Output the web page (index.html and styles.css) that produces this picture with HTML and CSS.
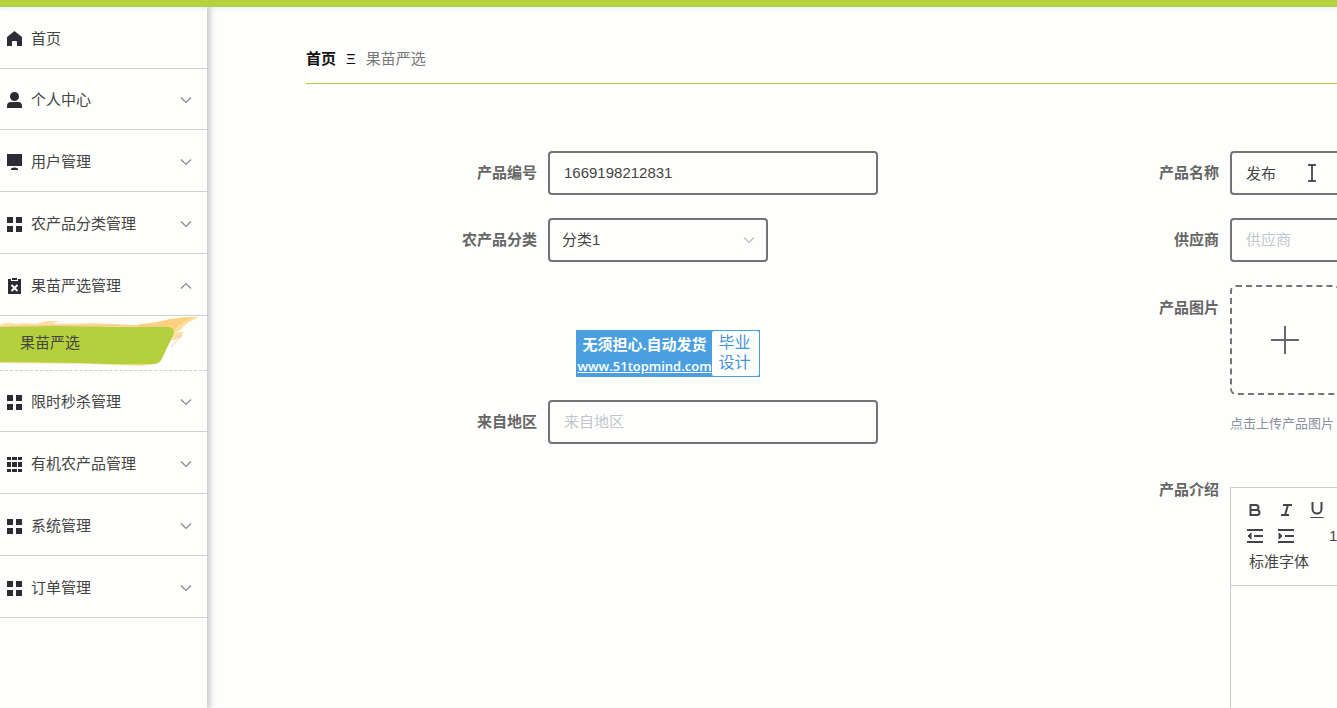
FILE: index.html
```html
<!DOCTYPE html>
<html lang="zh-CN">
<head>
<meta charset="utf-8">
<title>果苗严选</title>
<link rel="stylesheet" href="styles.css">
</head>
<body>
<svg class="sprite" width="0" height="0" aria-hidden="true">
  <symbol id="chevron" viewBox="0 0 12 12"><path d="M1 3.500l5 5 5-5" fill="none" stroke="currentColor" stroke-width="1.200"/></symbol>
  <symbol id="grid4" viewBox="0 0 16 16"><path d="M0 1h6v6H0zM9 1h6v6H9zM0 10h6v6H0zM9 10h6v6H9z"/></symbol>
</svg>
<header class="topbar"></header>
<div class="layout">
  <nav class="sidebar">
    <ul class="menu">
      <li><a class="menu-item" href="#"><svg class="icon" viewBox="0 0 16 16"><path d="M7.500 0L0 6v9h5v-4q0-1 1-1h3q1 0 1 1v4h5V6z"/></svg>首页</a></li>
      <li><a class="menu-item" href="#"><svg class="icon" viewBox="0 0 16 16"><circle cx="7.500" cy="4.500" r="4.500"/><path d="M0 16v-2q0-4 4-4h7q4 0 4 4v2z"/></svg>个人中心<svg class="chevron"><use href="#chevron"/></svg></a></li>
      <li><a class="menu-item" href="#"><svg class="icon" viewBox="0 0 16 16"><path d="M0 0h15v12H0zM4 14.500l3-1h1l3 1V16H4z"/></svg>用户管理<svg class="chevron"><use href="#chevron"/></svg></a></li>
      <li><a class="menu-item" href="#"><svg class="icon"><use href="#grid4"/></svg>农产品分类管理<svg class="chevron"><use href="#chevron"/></svg></a></li>
      <li>
        <a class="menu-item" href="#"><svg class="icon" viewBox="0 0 16 16"><path d="M1 1h3v2h7V1h3v15H1zM5 0h5v2H5z"/><path d="M4.500 7l6 6M10.500 7l-6 6" stroke="#fff" stroke-width="2"/></svg>果苗严选管理<svg class="chevron open"><use href="#chevron"/></svg></a>
        <a class="submenu-item" href="#">
          <svg class="brush" viewBox="0 0 208 54" preserveAspectRatio="none">
            <path d="M0 9q8-4 16-1l9-1 10 1 12-3 12 0-6 3 42-1 40 2q16-1 27-4 13-2 22-4l16 0-10 5q-6 4-8 8l-5 2q4 0 8 0l-6 6-7 2q-4 8-10 14l-6 10-14 2-50-2L0 47z" fill="#fce0a3"/>
            <path d="M140 8q20-1 30-5l26-2q-14 5-20 12l-5 5-6-7-25 0z" fill="#fbd07e"/>
            <path d="M0 11q60-3 140-1l24 1M174 24l9-5-11 12" fill="none" stroke="#f8c795"/>
            <path d="M0 11l55-1 70 1h45q7 2 4 8l-12 25q-2 4-8 4-33 1-73-1L0 46z" fill="#b5d03d"/>
          </svg>
          <span>果苗严选</span>
        </a>
      </li>
      <li><a class="menu-item" href="#"><svg class="icon"><use href="#grid4"/></svg>限时秒杀管理<svg class="chevron"><use href="#chevron"/></svg></a></li>
      <li><a class="menu-item" href="#"><svg class="icon" viewBox="0 0 16 16"><path d="M0 1h4v3H0zM5 1h5v3H5zM11 1h4v3h-4zM0 6h4v5H0zM5 6h5v5H5zM11 6h4v5h-4zM0 13h4v3H0zM5 13h5v3H5zM11 13h4v3h-4z"/></svg>有机农产品管理<svg class="chevron"><use href="#chevron"/></svg></a></li>
      <li><a class="menu-item" href="#"><svg class="icon"><use href="#grid4"/></svg>系统管理<svg class="chevron"><use href="#chevron"/></svg></a></li>
      <li><a class="menu-item" href="#"><svg class="icon"><use href="#grid4"/></svg>订单管理<svg class="chevron"><use href="#chevron"/></svg></a></li>
    </ul>
  </nav>
  <main class="content">
    <div class="breadcrumb">
      <a href="#">首页</a><span class="separator">Ξ</span><span>果苗严选</span>
    </div>
    <form class="form">
      <div class="column">
        <div class="field">
          <label for="code">产品编号</label>
          <input class="control" id="code" type="text" value="1669198212831">
        </div>
        <div class="field">
          <label for="category">农产品分类</label>
          <div class="select">
            <select class="control" id="category"><option>分类1</option></select>
            <svg class="chevron"><use href="#chevron"/></svg>
          </div>
        </div>
        <div class="promo">
          <div class="promo-text"><span>无须担心.自动发货</span><a href="#">www.51topmind.com</a></div>
          <div class="promo-tag"><span>毕业</span><span>设计</span></div>
        </div>
        <div class="field">
          <label for="region">来自地区</label>
          <input class="control" id="region" type="text" placeholder="来自地区">
        </div>
      </div>
      <div class="column">
        <div class="field">
          <label for="name">产品名称</label>
          <div class="pointer-box">
            <input class="control" id="name" type="text" value="发布">
            <svg class="pointer" viewBox="0 0 10 18"><path d="M1 1h8M1 17h8M5 1v16" fill="none" stroke="#222" stroke-width="1.500"/></svg>
          </div>
        </div>
        <div class="field">
          <label for="supplier">供应商</label>
          <input class="control" id="supplier" type="text" placeholder="供应商">
        </div>
        <div class="field tall">
          <label for="upload">产品图片</label>
          <div class="upload">
            <button class="upload-box" id="upload" type="button" aria-label="上传">
              <svg viewBox="0 0 28 28"><path d="M0 14h28M14 0v28" stroke="#666" stroke-width="2"/></svg>
            </button>
            <p class="tip">点击上传产品图片</p>
          </div>
        </div>
        <div class="field tall intro">
          <label for="editor">产品介绍</label>
          <div class="editor">
            <div class="toolbar">
              <div class="tools">
                <button type="button" aria-label="粗体"><svg viewBox="0 0 18 18"><path d="M4.500 4h5.500a2.500 2.500 0 0 1 0 5H4.500zM4.500 9h6.500a2.500 2.500 0 0 1 0 5H4.500z"/></svg></button>
                <button type="button" aria-label="斜体"><svg viewBox="0 0 18 18"><path d="M6 4h9M4 14h8M11 4l-3 10"/></svg></button>
                <button type="button" aria-label="下划线"><svg viewBox="0 0 18 18"><path d="M4.500 1v7a4.500 4.500 0 0 0 9 0V1"/><path d="M2.500 16.500h13" stroke-width="1"/></svg></button>
              </div>
              <div class="tools">
                <button type="button" aria-label="减少缩进"><svg viewBox="0 0 18 18"><path d="M1 3h16M8 9h9M1 15h16"/><path d="M5 6v6L2 9z" fill="#444" stroke-width="1"/></svg></button>
                <button type="button" aria-label="增加缩进"><svg viewBox="0 0 18 18"><path d="M1 3h16M8 9h9M1 15h16"/><path d="M2 6v6l3-3z" fill="#444" stroke-width="1"/></svg></button>
                <select class="size" aria-label="字号"><option>14px</option></select>
              </div>
              <div class="tools">
                <select class="family" aria-label="字体"><option>标准字体</option></select>
              </div>
            </div>
            <textarea class="editor-body" id="editor"></textarea>
          </div>
        </div>
      </div>
    </form>
  </main>
</div>
</body>
</html>
```
FILE: styles.css
```css
* { box-sizing: border-box; }

body {
  margin: 0;
  height: 100vh;
  overflow: hidden;
  display: flex;
  flex-direction: column;
  background: #fefefd;
  color: #444;
  font: 15px/20px "Liberation Sans", "Noto Sans CJK SC", sans-serif;
}

a { color: inherit; text-decoration: none; }
input, select, button, textarea { font: inherit; color: inherit; background: transparent; border: 0; padding: 0; margin: 0; }
select { appearance: none; }
.sprite { position: absolute; }

.topbar {
  flex: none;
  height: 7px;
  background: #b6d03f;
  box-shadow: 0 1px 5px #dcebf2;
}

.layout { flex: 1; display: flex; min-height: 0; }

.sidebar {
  flex: none;
  width: 207px;
  box-shadow: 2px 0 6px 1px #c4c4c4;
  clip-path: inset(0 -12px 0 0);
}
.menu { list-style: none; margin: 0; padding: 0; }
.menu-item {
  display: flex;
  align-items: center;
  gap: 8px;
  height: 62px;
  padding: 2px 15px 0 7px;
  border-bottom: 1px solid #d0d0d0;
}
.menu li:nth-child(4n+2) .menu-item { height: 61px; }
.icon { width: 16px; height: 16px; fill: #2d2b33; }
.chevron { width: 12px; height: 12px; margin-left: auto; color: #888; }
.chevron.open { transform: rotate(180deg); }
.submenu-item {
  position: relative;
  display: flex;
  align-items: center;
  height: 55px;
  padding-left: 20px;
  border-bottom: 1px dashed #ccc;
}
.submenu-item span { position: relative; }
.brush { position: absolute; inset: 0; width: 100%; height: 100%; }

.content { flex: 1; min-width: 0; padding: 37px 0 0 99px; overflow: hidden; }
.breadcrumb {
  display: flex;
  align-items: center;
  height: 40px;
  padding-bottom: 9px;
  border-bottom: 1px solid #b6d03f;
  color: #777;
}
.breadcrumb a, .separator { color: #111; }
.breadcrumb a { font-weight: 700; }
.separator { margin: 0 10px; }

.form {
  display: grid;
  grid-template-columns: repeat(2, minmax(682px, 66%));
  padding-top: 67px;
}
.column { display: flex; flex-direction: column; gap: 23px; }
.field { display: flex; align-items: center; gap: 11px; }
.field label {
  flex: none;
  width: 231px;
  text-align: right;
  font-weight: 700;
  color: #666;
}
.tall { align-items: flex-start; }
.tall label { padding-top: 13px; }
.control {
  width: 330px;
  height: 44px;
  padding: 0 14px 2px;
  border: 2px solid #747474;
  border-radius: 4px;
}
.control::placeholder { color: #c2c6cc; opacity: 1; }
.select { position: relative; }
.select .control { width: 220px; padding: 0 12px; }
.select .chevron { position: absolute; right: 13px; top: 16px; color: #bbb; pointer-events: none; }
.pointer-box { position: relative; }
.pointer { position: absolute; left: 77px; top: 13px; width: 10px; height: 18px; }

.promo {
  align-self: flex-start;
  display: flex;
  margin: 45px 0 0 270px;
  padding: 1px;
  background: #4a9fe0;
  color: #fff;
}
.promo-text { display: flex; flex-direction: column; justify-content: flex-end; align-items: center; gap: 1px; width: 135px; white-space: nowrap; }
.promo-text span { font-weight: 700; font-size: 15px; }
.promo-text a { font: 600 13px/20px "Open Sans", sans-serif; text-decoration: underline; }
.promo-tag {
  display: flex;
  flex-direction: column;
  align-items: center;
  width: 47px;
  padding: 2px 2px 3px 0;
  background: #fff;
  color: #4595d5;
  border-radius: 2px;
  font-size: 16px;
}

.upload-box {
  display: grid;
  place-items: center;
  width: 110px;
  height: 110px;
  border: 2px dashed #747474;
  border-radius: 6px;
}
.upload-box svg { width: 28px; height: 28px; }
.tip { margin: 19px 0 0; font-size: 13px; color: #8b929d; }
.intro { margin-top: 30px; }
.intro label { padding-top: 0; margin-top: -7px; }

.editor { width: 330px; border: 1px solid #ccc; }
.toolbar { padding: 9px 8px 10px; border-bottom: 1px solid #ccc; }
.tools { display: flex; align-items: center; height: 26px; }
.tools button { display: grid; place-items: center; width: 31px; height: 26px; }
.tools svg { width: 18px; height: 18px; fill: none; stroke: #444; stroke-width: 2; }
.size { margin-left: 28px; width: 80px; }
.family { margin-left: 10px; width: 100px; }
.editor-body { display: block; width: 100%; height: 200px; resize: none; }
```
